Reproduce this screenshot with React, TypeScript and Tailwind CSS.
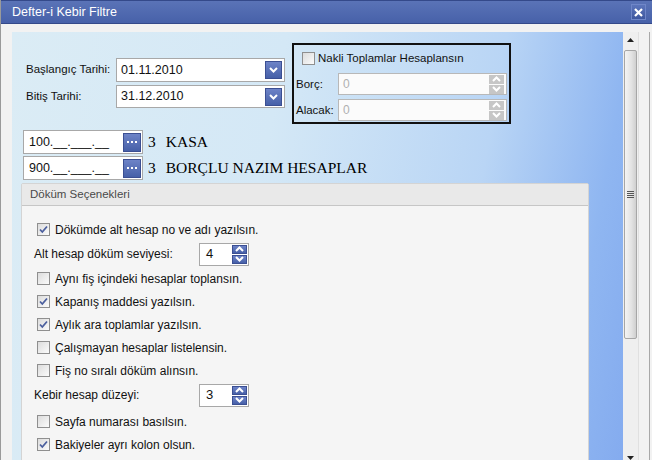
import React from "react";

const Chevron = ({ up = false, color = "white" }: { up?: boolean; color?: string }) => (
    <svg width="9" height="6" viewBox="0 0 9 6">
        <path d={up ? "M1 5l3.5-3.5L8 5" : "M1 1l3.5 3.5L8 1"} stroke={color} strokeWidth="2" fill="none" />
    </svg>
);

const BlueBox = ({ className = "", children }: { className?: string; children?: React.ReactNode }) => (
    <div className={`flex items-center justify-center border border-[#3b4f93] bg-[linear-gradient(to_bottom,#6d83c7,#4660a8)] ${className}`}>
        {children}
    </div>
);

const Checkbox = ({ checked = false }: { checked?: boolean }) => (
    <div className="flex items-center justify-center w-[13px] h-[13px] border border-[#8f8f8f] bg-[linear-gradient(135deg,#dcdcdc,#fbfbfb)] shrink-0">
        {checked && (
            <svg width="9" height="9" viewBox="0 0 9 9">
                <path d="M1 4.5l2.3 2.5L8 1.5" stroke="#4b5f9e" strokeWidth="1.8" fill="none" />
            </svg>
        )}
    </div>
);

const DateInput = ({ value, h }: { value: string; h: string }) => (
    <div className={`flex items-center justify-between w-[169px] ${h} border border-[#a8a8a8] bg-white pl-[4px] pr-[2px]`}>
        <span className="text-[12.5px] text-[#111]">{value}</span>
        <BlueBox className="w-[17px] h-[18px]">
            <Chevron />
        </BlueBox>
    </div>
);

const DisabledSpin = () => (
    <div className="flex items-center justify-between w-[169px] h-[22px] border border-[#b8b8b8] bg-[#fbfbfb] pl-[4px] pr-[2px]">
        <span className="text-[12px] text-[#b0b0b0]">0</span>
        <div className="flex flex-col gap-[1px]">
            <div className="flex items-center justify-center w-[15px] h-[9px] bg-[#c6c6c6]"><Chevron up /></div>
            <div className="flex items-center justify-center w-[15px] h-[9px] bg-[#c6c6c6]"><Chevron /></div>
        </div>
    </div>
);

const AccountRow = ({ code, name }: { code: string; name: string }) => (
    <div className="flex items-center h-[24px]">
        <div className="flex items-center justify-between w-[120px] h-full border border-[#a8a8a8] bg-white pl-[5px] pr-[1px]">
            <span className="text-[12.5px] text-[#111]">{code}</span>
            <BlueBox className="w-[18px] h-[19px] gap-[2px]">
                <span className="w-[2px] h-[2px] bg-white" />
                <span className="w-[2px] h-[2px] bg-white" />
                <span className="w-[2px] h-[2px] bg-white" />
            </BlueBox>
        </div>
        <span className="ml-[5px] font-['Liberation_Serif',serif] text-[15.5px] text-black">3</span>
        <span className="ml-[10px] font-['Liberation_Serif',serif] text-[15.5px] text-black">{name}</span>
    </div>
);

const CheckRow = ({ label, checked = false, className = "" }: { label: string; checked?: boolean; className?: string }) => (
    <div className={`flex items-center h-[23px] pl-[15px] gap-[5px] ${className}`}>
        <Checkbox checked={checked} />
        <span className="text-[12px] text-[#111]">{label}</span>
    </div>
);

const SpinRow = ({ label, value }: { label: string; value: string }) => (
    <div className="flex items-center h-[26px] pl-[12px]">
        <span className="w-[165px] text-[12px] text-[#111]">{label}</span>
        <div className="flex items-center justify-between w-[50px] h-[23px] border border-[#a8a8a8] bg-white pl-[6px] pr-[1px]">
            <span className="text-[13px] text-[#111]">{value}</span>
            <div className="flex flex-col gap-[1px]">
                <BlueBox className="w-[15px] h-[9px]"><Chevron up /></BlueBox>
                <BlueBox className="w-[15px] h-[9px]"><Chevron /></BlueBox>
            </div>
        </div>
    </div>
);

export default function App() {
    return (
        <div className="w-[652px] h-[460px] overflow-hidden bg-[#f2f2f2] font-['Liberation_Sans',Arial,sans-serif] border-l border-[#9a9a9a]">
            {/* title bar */}
            <div className="flex items-center justify-between h-[24px] pl-[11px] pr-[6px] bg-[linear-gradient(to_bottom,#5a73b7,#4761a9)] border-t border-b border-[#34498a]">
                <span className="text-[12.5px] text-white">Defter-i Kebir Filtre</span>
                <div className="flex items-center justify-center w-[15px] h-[16px] border border-[#6f86c8] bg-[linear-gradient(to_bottom,#5c75bb,#3e579f)]">
                    <svg width="9" height="9" viewBox="0 0 9 9">
                        <path d="M1 1l7 7M8 1L1 8" stroke="white" strokeWidth="2.2" />
                    </svg>
                </div>
            </div>

            <div className="flex pt-[8px] pl-[11px]">
                {/* content */}
                <div className="w-[611px] h-[440px] pl-[9px] bg-[linear-gradient(100deg,#dbecf5_0%,#d4e8f6_40%,#b9d5f5_72%,#8fb6f1_90%,#84abef_100%)]">
                    <div className="flex items-start pt-[11px]">
                        <div className="flex flex-col ml-[5px] pt-[15px] gap-[3px]">
                            <div className="flex items-center">
                                <span className="w-[90px] text-[11.5px] text-[#111]">Başlangıç Tarihi:</span>
                                <DateInput value="01.11.2010" h="h-[24px]" />
                            </div>
                            <div className="flex items-center">
                                <span className="w-[90px] text-[11.5px] text-[#111]">Bitiş Tarihi:</span>
                                <DateInput value="31.12.2010" h="h-[23px]" />
                            </div>
                        </div>
                        <div className="ml-[7px] w-[219px] h-[81px] border-2 border-[#111] px-[2px] pt-[5px]">
                            <div className="flex items-center gap-[3px] pl-[6px]">
                                <Checkbox />
                                <span className="text-[11.5px] text-[#111]">Nakli Toplamlar Hesaplansın</span>
                            </div>
                            <div className="flex items-center justify-between mt-[6px]">
                                <span className="text-[11.5px] text-[#111]">Borç:</span>
                                <DisabledSpin />
                            </div>
                            <div className="flex items-center justify-between mt-[4px]">
                                <span className="text-[11.5px] text-[#111]">Alacak:</span>
                                <DisabledSpin />
                            </div>
                        </div>
                    </div>

                    <div className="flex flex-col gap-[2px] mt-[6px] ml-[2px]">
                        <AccountRow code="100.__.___.__" name="KASA" />
                        <AccountRow code="900.__.___.__" name="BORÇLU NAZIM HESAPLAR" />
                    </div>

                    {/* panel */}
                    <div className="mt-[3px] w-[568px] rounded-t-[2px] border border-[#d4d4d4] bg-[#f5f5f5]">
                        <div className="flex items-center h-[22px] pl-[8px] bg-[#e9e9e9] border-b border-[#c6c6c6]">
                            <span className="text-[11.5px] text-[#4a4a4a]">Döküm Seçenekleri</span>
                        </div>
                        <div className="flex flex-col pt-[12px] pb-[20px]">
                            <CheckRow checked label="Dökümde alt hesap no ve adı yazılsın." />
                            <SpinRow label="Alt hesap döküm seviyesi:" value="4" />
                            <CheckRow label="Aynı fiş içindeki hesaplar toplansın." />
                            <CheckRow checked label="Kapanış maddesi yazılsın." />
                            <CheckRow checked label="Aylık ara toplamlar yazılsın." />
                            <CheckRow label="Çalışmayan hesaplar listelensin." />
                            <CheckRow label="Fiş no sıralı döküm alınsın." />
                            <SpinRow label="Kebir hesap düzeyi:" value="3" />
                            <CheckRow className="mt-[2px]" label="Sayfa numarası basılsın." />
                            <CheckRow checked label="Bakiyeler ayrı kolon olsun." />
                        </div>
                    </div>
                </div>

                {/* scrollbar */}
                <div className="flex flex-col w-[16px] h-[434px] bg-[#efefef] border-r border-[#e0e0e0]">
                    <div className="flex items-center justify-center h-[16px]">
                        <svg width="7" height="4" viewBox="0 0 7 4"><path d="M0 4L3.5 0L7 4Z" fill="#222" /></svg>
                    </div>
                    <div className="flex items-center justify-center mt-[2px] mx-[1px] h-[289px] rounded-[2px] border border-[#a6a6a6] bg-[linear-gradient(to_right,#f4f4f4,#e2e2e2_60%,#cfcfcf)]">
                        <div className="flex flex-col gap-[1px]">
                            <span className="w-[7px] h-[1px] bg-[#555]" />
                            <span className="w-[7px] h-[1px] bg-[#555]" />
                            <span className="w-[7px] h-[1px] bg-[#555]" />
                            <span className="w-[7px] h-[1px] bg-[#555]" />
                        </div>
                    </div>
                    <div className="flex-1" />
                    <div className="flex items-center justify-center h-[16px]">
                        <svg width="7" height="4" viewBox="0 0 7 4"><path d="M0 0L3.5 4L7 0Z" fill="#222" /></svg>
                    </div>
                </div>
                <div className="ml-[10px] w-[1px] h-[440px] bg-[#a8a8a8]" />
            </div>
        </div>
    );
}
